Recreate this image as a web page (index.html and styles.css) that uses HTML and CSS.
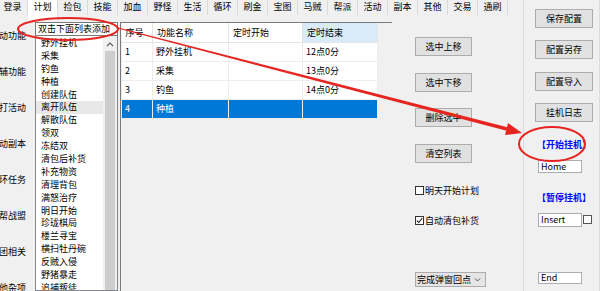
FILE: index.html
```html
<!DOCTYPE html>
<html lang="zh-CN">
<head>
  <meta charset="UTF-8" />
  <title>计划</title>
  <link rel="stylesheet" href="styles.css">
</head>
<body>
  <div class="window">
    <div class="main">
      <nav class="tabs">
        <span class="tab">登录</span>
        <span class="tab active">计划</span>
        <span class="tab">捡包</span>
        <span class="tab">技能</span>
        <span class="tab">加血</span>
        <span class="tab">野怪</span>
        <span class="tab">生活</span>
        <span class="tab">循环</span>
        <span class="tab">刷金</span>
        <span class="tab">宝图</span>
        <span class="tab">马贼</span>
        <span class="tab">帮派</span>
        <span class="tab">活动</span>
        <span class="tab">副本</span>
        <span class="tab">其他</span>
        <span class="tab">交易</span>
        <span class="tab">通刷</span>
      </nav>

      <div class="page">
        <div class="side-labels">
          <div class="side-label">自动功能</div>
          <div class="side-label">自辅功能</div>
          <div class="side-label">自打活动</div>
          <div class="side-label">自动副本</div>
          <div class="side-label">循环任务</div>
          <div class="side-label">帮帮战盟</div>
          <div class="side-label">组团相关</div>
          <div class="side-label">其他杂项</div>
        </div>

        <div class="listbox">
          <div class="listbox-head">双击下面列表添加</div>
          <div class="listbox-body">
            <ul class="listbox-items">
              <li>野外挂机</li>
              <li>采集</li>
              <li>钓鱼</li>
              <li>种植</li>
              <li>创建队伍</li>
              <li class="hover">离开队伍</li>
              <li>解散队伍</li>
              <li>领双</li>
              <li>冻结双</li>
              <li>清包后补货</li>
              <li>补充物资</li>
              <li>清理背包</li>
              <li>满怒治疗</li>
              <li>明日开始</li>
              <li>珍珑棋局</li>
              <li>楼兰寻宝</li>
              <li>横扫牡丹碗</li>
              <li>反贼入侵</li>
              <li>野猪暴走</li>
              <li>追捕叛徒</li>
            </ul>
            <div class="scrollbar">
              <svg class="scroll-up" width="14" height="12" viewBox="0 0 14 12">
                <polyline points="4,8 7,5 10,8" fill="none" stroke="#606060" stroke-width="1.2"/>
              </svg>
              <div class="thumb"></div>
            </div>
          </div>
        </div>

        <div class="listview">
          <table class="plan-table">
            <colgroup>
              <col style="width:31px">
              <col style="width:76px">
              <col style="width:74px">
              <col style="width:75px">
            </colgroup>
            <thead>
              <tr>
                <th>序号</th>
                <th>功能名称</th>
                <th>定时开始</th>
                <th class="sorted">定时结束</th>
              </tr>
            </thead>
            <tbody>
              <tr><td>1</td><td>野外挂机</td><td></td><td>12点0分</td></tr>
              <tr><td>2</td><td>采集</td><td></td><td>13点0分</td></tr>
              <tr><td>3</td><td>钓鱼</td><td></td><td>14点0分</td></tr>
              <tr class="selected"><td>4</td><td>种植</td><td></td><td></td></tr>
            </tbody>
          </table>
        </div>

        <div class="mid-panel">
          <button class="btn">选中上移</button>
          <button class="btn">选中下移</button>
          <button class="btn">删除选中</button>
          <button class="btn">清空列表</button>

          <label class="check first">
            <span class="check-box"></span>明天开始计划
          </label>
          <label class="check">
            <span class="check-box">
              <svg width="7" height="7" viewBox="0 0 7 7"><polyline points="0.8,3.6 2.7,5.5 6.2,1.2" fill="none" stroke="#222" stroke-width="1.1"/></svg>
            </span>自动清包补货
          </label>

          <div class="combo">
            <span>完成弹窗回点</span>
            <svg width="9" height="9" viewBox="0 0 9 9"><polyline points="2,3.5 4.5,6 7,3.5" fill="none" stroke="#555" stroke-width="1"/></svg>
          </div>
        </div>
      </div>
    </div>

    <aside class="side-panel">
      <button class="btn wide">保存配置</button>
      <button class="btn wide">配置另存</button>
      <button class="btn wide">配置导入</button>
      <button class="btn wide">挂机日志</button>

      <div class="hotkey-title first">【开始挂机】</div>
      <div class="hotkey">Home</div>
      <div class="hotkey-title">【暂停挂机】</div>
      <div class="hotkey-row">
        <div class="hotkey">Insert</div>
        <span class="check-box small"></span>
      </div>
      <div class="hotkey end">End</div>
    </aside>
  </div>

  <!-- red annotations drawn over the window -->
  <svg class="marks" width="600" height="291" viewBox="0 0 600 291">
    <ellipse cx="68" cy="29" rx="50" ry="11" fill="none" stroke="#e62520" stroke-width="2"/>
    <ellipse cx="552" cy="144" rx="33" ry="17" fill="none" stroke="#e62520" stroke-width="2"/>
    <polygon points="118.2,27.4 117.8,28.6 506.6,130.8 507.4,127.2" fill="#e62520"/>
    <polygon points="522,133 505,135 508,123" fill="#e62520"/>
  </svg>
</body>
</html>
```

FILE: styles.css
```css
* { margin: 0; padding: 0; box-sizing: border-box; }

html, body {
  width: 600px;
  height: 291px;
  overflow: hidden;
}

body {
  position: relative;
  background: #f0f0f0;
  font-family: "Noto Sans CJK SC", "Noto Sans", sans-serif;
  font-size: 9px;
  color: #000;
}

.window {
  display: flex;
  height: 100%;
}

.main {
  width: 523px;
  display: flex;
  flex-direction: column;
}

/* tab strip */
.tabs {
  display: flex;
  align-items: flex-start;
  height: 22px;
  margin-left: -2px;
}

.tab {
  flex-shrink: 0;
  width: 30px;
  height: 15px;
  line-height: 14px;
  text-align: center;
  border-right: 1px solid #dadada;
}

.tab.active {
  background: #fff;
  height: 20px;
}

.page {
  flex: 1;
  display: flex;
  min-height: 0;
}

/* clipped labels of the hidden left panel */
.side-labels {
  width: 35px;
  padding-top: 7px;
}

.side-label {
  width: 26px;
  height: 36px;
  line-height: 14px;
  display: flex;
  justify-content: flex-end;
  white-space: nowrap;
  overflow: hidden;
}

/* list of functions */
.listbox {
  width: 83px;
  display: flex;
  flex-direction: column;
}

.listbox-head {
  height: 14px;
  line-height: 12px;
  padding-left: 2px;
  background: #fff;
  border: 1px solid #7a7a7a;
  white-space: nowrap;
}

.listbox-body {
  flex: 1;
  min-height: 0;
  display: flex;
  background: #fff;
  border: 1px solid #828790;
  border-top: none;
  overflow: hidden;
}

.listbox-items {
  flex: 1;
  list-style: none;
  padding-top: 1px;
}

.listbox-items li {
  height: 12.9px;
  line-height: 12.9px;
  padding-left: 5px;
  white-space: nowrap;
}

.listbox-items li.hover {
  background: #e8e8e8;
}

.scrollbar {
  width: 14px;
  background: #f0f0f0;
  display: flex;
  flex-direction: column;
}

.scroll-up {
  display: block;
  margin-top: 2px;
}

.thumb {
  flex: 1;
  margin: 1px 2px 0 2px;
  background: #cdcdcd;
}

/* plan table */
.listview {
  width: 272px;
  margin-left: 2px;
  border-left: 1px solid #7a7a7a;
  border-top: 1px solid #7a7a7a;
}

.plan-table {
  border-collapse: collapse;
  table-layout: fixed;
  width: 256px;
}

.plan-table th {
  height: 19px;
  padding-left: 4px;
  font-weight: normal;
  text-align: left;
  background: #fff;
  border-right: 1px solid #e5e5e5;
  border-bottom: 1px solid #e5e5e5;
}

.plan-table th.sorted {
  background: #d9ebf9;
}

.plan-table td {
  height: 19px;
  padding-left: 3px;
  background: #fff;
  border: 1px solid #ededed;
  white-space: nowrap;
}

.plan-table tr.selected td {
  background: #0078d7;
  color: #fff;
}

/* buttons and options in the middle */
.mid-panel {
  width: 131px;
  padding: 15px 0 0 23px;
  display: flex;
  flex-direction: column;
  align-items: flex-start;
}

.btn {
  width: 57px;
  height: 19px;
  padding: 0;
  font: inherit;
  line-height: 17px;
  text-align: center;
  color: #000;
  background: #e1e1e1;
  border: 1px solid #adadad;
}

.mid-panel .btn + .btn {
  margin-top: 16.5px;
}

.check {
  display: flex;
  align-items: center;
  height: 13px;
  margin-top: 17px;
}

.check.first {
  margin-top: 21px;
}

.check-box {
  width: 9px;
  height: 9px;
  margin-right: 1px;
  background: #fff;
  border: 1px solid #333;
  display: flex;
  align-items: center;
  justify-content: center;
}

.combo {
  width: 71px;
  height: 15px;
  margin-top: 45.5px;
  padding: 0 3px 0 1px;
  line-height: 13px;
  display: flex;
  align-items: center;
  justify-content: space-between;
  background: #e5e5e5;
  border: 1px solid #acacac;
}

/* right column */
.side-panel {
  width: 77px;
  padding: 9px 0 0 11px;
  display: flex;
  flex-direction: column;
  align-items: flex-start;
  border-left: 1px solid #dcdcdc;
  border-right: 1px solid #dcdcdc;
}

.btn.wide {
  width: 58px;
}

.side-panel .btn + .btn {
  margin-top: 12.3px;
}

.hotkey-title {
  margin: 19px 0 0 2px;
  line-height: 12px;
  color: #0000ff;
  font-weight: bold;
  white-space: nowrap;
}

.hotkey-title.first {
  margin-top: 17px;
}

.hotkey {
  width: 44px;
  height: 13px;
  margin: 9px 0 0 3px;
  padding-left: 2px;
  line-height: 11px;
  background: #fff;
  border: 1px solid #abadb3;
}

.hotkey-row {
  display: flex;
  align-items: center;
  margin-top: 9px;
}

.hotkey-row .hotkey {
  height: 14px;
  line-height: 12px;
  margin-top: 0;
}

.check-box.small {
  margin-left: 1px;
  border-color: #555;
}

.hotkey.end {
  height: 12px;
  line-height: 10px;
  margin-top: 45px;
}

/* annotation overlay */
.marks {
  position: absolute;
  top: 0;
  left: 0;
  pointer-events: none;
}
```
